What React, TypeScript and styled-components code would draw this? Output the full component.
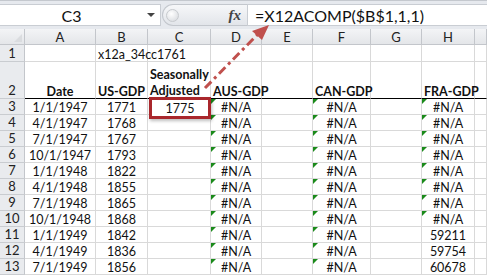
import React from "react";
import styled, { createGlobalStyle } from "styled-components";

const Global = createGlobalStyle`
  html, body { margin: 0; padding: 0; background: #ffffff; }
  body { width: 487px; height: 275px; overflow: hidden; font-family: Lato, "Liberation Sans", sans-serif; }
`;

const Page = styled.div`
  position: relative;
  width: 487px;
  height: 275px;
  overflow: hidden;
  background: #ffffff;
`;

const FormulaBar = styled.div`
  display: flex;
  align-items: stretch;
  height: 29px;
  box-sizing: border-box;
  padding: 3px 0 3px 0;
  background: #e6e9ee;
  border-top: 1px solid #c4c8ce;
`;

const NameBox = styled.div`
  display: flex;
  align-items: center;
  width: 161px;
  box-sizing: border-box;
  background: #ffffff;
  border: 1px solid #c9cdd3;
  border-left: none;
  font-family: Lato, "Liberation Sans", sans-serif;
  font-size: 16px;
  color: #111;
`;

const NameText = styled.span`
  flex: 1;
  text-align: center;
  margin-left: -4px;
`;

const DropArrow = styled.span`
  width: 0;
  height: 0;
  margin-right: 5px;
  border-left: 4px solid transparent;
  border-right: 4px solid transparent;
  border-top: 4px solid #444;
`;

const Pill = styled.div`
  display: flex;
  align-items: center;
  width: 85px;
  box-sizing: border-box;
  margin-left: 1px;
  border-radius: 12px 0 0 12px;
  background: linear-gradient(#f6f7f9, #e2e5ea);
  border: 1px solid #c3c7cd;
  border-right: none;
`;

const Knob = styled.span`
  width: 11px;
  height: 11px;
  margin-left: 3px;
  border-radius: 50%;
  background: radial-gradient(circle at 40% 35%, #ffffff, #d3d6db);
  border: 1px solid #c7cace;
`;

const Fx = styled.span`
  margin-left: auto;
  margin-right: 6px;
  font-family: "Liberation Serif", serif;
  font-style: italic;
  font-weight: bold;
  font-size: 15px;
  color: #444;
`;

const FormulaInput = styled.div`
  flex: 1;
  display: flex;
  align-items: center;
  box-sizing: border-box;
  padding-left: 7px;
  background: #ffffff;
  border: 1px solid #c9cdd3;
  border-right: none;
  font-family: Lato, "Liberation Sans", sans-serif;
  font-size: 16px;
  color: #111;
`;

const Sheet = styled.div`
  display: grid;
  grid-template-columns: 25px 71px 52px 63px 51px 51px 58px 51px 53px 12px;
  grid-template-rows: 16px 17px 37px repeat(11, 16px);
`;

const Corner = styled.div`
  position: relative;
  box-sizing: border-box;
  background: linear-gradient(#f3f4f6, #e4e6e9);
  border-right: 1px solid #c3c6cb;
  border-bottom: 1px solid #c3c6cb;
  &::after {
    content: "";
    position: absolute;
    right: 2px;
    bottom: 2px;
    width: 0;
    height: 0;
    border-left: 8px solid transparent;
    border-bottom: 8px solid #dadcdf;
  }
`;

const ColHead = styled.div`
  display: flex;
  align-items: center;
  justify-content: center;
  box-sizing: border-box;
  background: linear-gradient(#f3f4f6, #e4e6e9);
  border-right: 1px solid #c3c6cb;
  border-bottom: 1px solid #c3c6cb;
  font-family: Lato, "Liberation Sans", sans-serif;
  font-size: 13px;
  color: #222;
`;

const RowHead = styled.div`
  display: flex;
  align-items: flex-end;
  justify-content: center;
  box-sizing: border-box;
  padding-bottom: 1px;
  background: #e9ebee;
  border-right: 1px solid #c3c6cb;
  border-bottom: 1px solid #c9ccd0;
  font-family: Lato, "Liberation Sans", sans-serif;
  font-size: 13px;
  line-height: 13px;
  color: #222;
`;

const Cell = styled.div<{ $align?: string; $bold?: boolean; $thick?: boolean; $err?: boolean; $wrap?: boolean }>`
  position: relative;
  display: flex;
  align-items: flex-end;
  justify-content: ${(p) => p.$align || "center"};
  box-sizing: border-box;
  padding: 0 2px;
  border-right: 1px solid #d9d9d9;
  border-bottom: ${(p) => (p.$thick ? "1px solid #000000" : "1px solid #d9d9d9")};
  font-family: Lato, "Liberation Sans", sans-serif;
  font-size: 12.5px;
  line-height: 13px;
  font-weight: ${(p) => (p.$bold ? 700 : 400)};
  color: #111;
  white-space: ${(p) => (p.$wrap ? "normal" : "nowrap")};
  overflow: visible;
  z-index: ${(p) => (p.$align === "flex-start" ? 2 : 1)};
  ${(p) =>
    p.$err
      ? `&::before {
    content: "";
    position: absolute;
    left: 0;
    top: 0;
    width: 0;
    height: 0;
    border-top: 5px solid #1a8a1a;
    border-right: 5px solid transparent;
  }`
      : ""}
`;

const Overflow = styled.span`
  display: block;
  width: 0;
  overflow: visible;
`;

const WrapText = styled.span`
  display: block;
  line-height: 16px;
  margin-bottom: -1px;
`;

const Highlight = styled.div`
  position: absolute;
  left: 149px;
  top: 97px;
  width: 62px;
  height: 22px;
  box-sizing: border-box;
  border: 3px solid #a9272c;
  box-shadow: 1px 2px 3px rgba(0, 0, 0, 0.25);
  background: #ffffff;
  display: flex;
  align-items: center;
  justify-content: center;
  font-family: Lato, "Liberation Sans", sans-serif;
  font-size: 12.5px;
  color: #111;
  z-index: 5;
`;

const ArrowLayer = styled.svg`
  position: absolute;
  left: 0;
  top: 0;
  width: 487px;
  height: 275px;
  pointer-events: none;
  z-index: 6;
`;

const cols = ["A", "B", "C", "D", "E", "F", "G", "H", ""];

const rows: [string, string, string, string][] = [
  ["1/1/1947", "1771", "#N/A", "#N/A"],
  ["4/1/1947", "1768", "#N/A", "#N/A"],
  ["7/1/1947", "1767", "#N/A", "#N/A"],
  ["10/1/1947", "1793", "#N/A", "#N/A"],
  ["1/1/1948", "1822", "#N/A", "#N/A"],
  ["4/1/1948", "1855", "#N/A", "#N/A"],
  ["7/1/1948", "1865", "#N/A", "#N/A"],
  ["10/1/1948", "1868", "#N/A", "#N/A"],
  ["1/1/1949", "1842", "#N/A", "59211"],
  ["4/1/1949", "1836", "#N/A", "59754"],
  ["7/1/1949", "1856", "#N/A", "60678"],
];

export default function App() {
  return (
    <Page>
      <Global />
      <FormulaBar>
        <NameBox>
          <NameText>C3</NameText>
          <DropArrow />
        </NameBox>
        <Pill>
          <Knob />
          <Fx>fx</Fx>
        </Pill>
        <FormulaInput>=X12ACOMP($B$1,1,1)</FormulaInput>
      </FormulaBar>
      <Sheet>
        <Corner />
        {cols.map((c, i) => (
          <ColHead key={i}>{c}</ColHead>
        ))}

        <RowHead>1</RowHead>
        <Cell />
        <Cell $align="flex-start">
          <Overflow>x12a_34cc1761</Overflow>
        </Cell>
        <Cell />
        <Cell />
        <Cell />
        <Cell />
        <Cell />
        <Cell />
        <Cell />

        <RowHead>2</RowHead>
        <Cell $bold $thick>Date</Cell>
        <Cell $bold $thick>US-GDP</Cell>
        <Cell $bold $thick $align="flex-start" $wrap>
          <WrapText>Seasonally Adjusted</WrapText>
        </Cell>
        <Cell $bold $thick $align="flex-start">
          <Overflow>AUS-GDP</Overflow>
        </Cell>
        <Cell $thick />
        <Cell $bold $thick $align="flex-start">
          <Overflow>CAN-GDP</Overflow>
        </Cell>
        <Cell $thick />
        <Cell $bold $thick $align="flex-start">
          <Overflow>FRA-GDP</Overflow>
        </Cell>
        <Cell $thick />

        {rows.map((r, i) => (
          <React.Fragment key={i}>
            <RowHead>{i + 3}</RowHead>
            <Cell>{r[0]}</Cell>
            <Cell>{r[1]}</Cell>
            <Cell />
            <Cell $err>{r[2]}</Cell>
            <Cell />
            <Cell $err>{r[2]}</Cell>
            <Cell />
            <Cell $err={r[3] === "#N/A"}>{r[3]}</Cell>
            <Cell />
          </React.Fragment>
        ))}
      </Sheet>
      <Highlight>1775</Highlight>
      <ArrowLayer viewBox="0 0 487 275">
        <line
          x1="205"
          y1="88"
          x2="258"
          y2="34"
          stroke="#c0504d"
          strokeWidth="3"
          strokeDasharray="9 4 3 4"
        />
        <polygon points="269,25 252,31 262,40" fill="#c0504d" />
      </ArrowLayer>
    </Page>
  );
}
